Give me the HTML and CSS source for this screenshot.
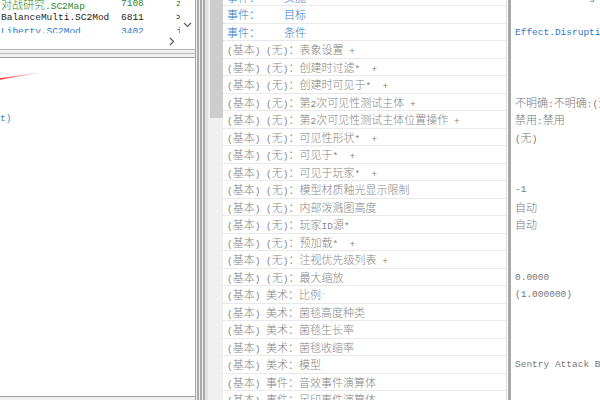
FILE: index.html
```html
<!DOCTYPE html>
<html lang="zh">
<head>
    <meta charset="UTF-8">
    <meta name="viewport" content="width=device-width, initial-scale=1.0">
    <title>数据编辑器</title>
    <link rel="stylesheet" href="styles.css">
</head>
<body>
    <div class="editor">
        <!-- 左侧：文件列表 + 画布 -->
        <div class="left">
            <div class="files">
                <div class="file-list">
                    <div class="file green"><span class="fname">对战研究<span class="m">.SC2Map</span></span><span class="fsize m">7108</span><span class="fext m">z</span></div>
                    <div class="file dark"><span class="fname m">BalanceMulti.SC2Mod</span><span class="fsize m">6811</span><span class="fext m">&gt;</span></div>
                    <div class="file blue"><span class="fname m">Liberty.SC2Mod</span><span class="fsize m">3402</span><span class="fext m">j</span></div>
                </div>
                <div class="vscroll">
                    <svg width="9" height="6" viewBox="0 0 9 6"><polyline points="1,1 4.5,4.5 8,1" fill="none" stroke="#5a5a5a" stroke-width="1.2"/></svg>
                </div>
            </div>
            <div class="hscroll">
                <svg width="6" height="9" viewBox="0 0 6 9"><polyline points="1,1 4.5,4.5 1,8" fill="none" stroke="#5a5a5a" stroke-width="1.2"/></svg>
            </div>
            <div class="sash"></div>
            <div class="canvas">
                <svg class="stroke" width="40" height="8" viewBox="0 0 40 8">
                    <defs>
                        <linearGradient id="fade" x1="0" x2="1" y1="0" y2="0">
                            <stop offset="0" stop-color="#ff1e1e"/>
                            <stop offset="1" stop-color="#ff9a9a" stop-opacity="0.3"/>
                        </linearGradient>
                    </defs>
                    <polygon points="0,6.2 38,0.6 38,1.2 0,7.8" fill="url(#fade)"/>
                </svg>
                <div class="code m">t)</div>
            </div>
        </div>

        <div class="splitter"></div>
        <div class="scrollbar"><div class="thumb"></div></div>

        <!-- 右侧：属性表 -->
        <div class="props">
            <div class="names list">
                <div class="row ev"><span class="k">事件：</span>实施</div>
                <div class="row ev"><span class="k">事件：</span>目标</div>
                <div class="row ev"><span class="k">事件：</span>条件</div>
                <div class="row"><span class="m">(</span>基本<span class="m">) (</span>无<span class="m">)</span>：表象设置<span class="m"> +</span></div>
                <div class="row"><span class="m">(</span>基本<span class="m">) (</span>无<span class="m">)</span>：创建时过滤<span class="m">*  +</span></div>
                <div class="row"><span class="m">(</span>基本<span class="m">) (</span>无<span class="m">)</span>：创建时可见于<span class="m">*  +</span></div>
                <div class="row"><span class="m">(</span>基本<span class="m">) (</span>无<span class="m">)</span>：第<span class="m">2</span>次可见性测试主体<span class="m"> +</span></div>
                <div class="row"><span class="m">(</span>基本<span class="m">) (</span>无<span class="m">)</span>：第<span class="m">2</span>次可见性测试主体位置操作<span class="m"> +</span></div>
                <div class="row"><span class="m">(</span>基本<span class="m">) (</span>无<span class="m">)</span>：可见性形状<span class="m">*  +</span></div>
                <div class="row"><span class="m">(</span>基本<span class="m">) (</span>无<span class="m">)</span>：可见于<span class="m">*  +</span></div>
                <div class="row"><span class="m">(</span>基本<span class="m">) (</span>无<span class="m">)</span>：可见于玩家<span class="m">*  +</span></div>
                <div class="row"><span class="m">(</span>基本<span class="m">) (</span>无<span class="m">)</span>：模型材质釉光显示限制</div>
                <div class="row"><span class="m">(</span>基本<span class="m">) (</span>无<span class="m">)</span>：内部泼溅图高度</div>
                <div class="row"><span class="m">(</span>基本<span class="m">) (</span>无<span class="m">)</span>：玩家<span class="m">ID</span>源<span class="m">*</span></div>
                <div class="row"><span class="m">(</span>基本<span class="m">) (</span>无<span class="m">)</span>：预加载<span class="m">*  +</span></div>
                <div class="row"><span class="m">(</span>基本<span class="m">) (</span>无<span class="m">)</span>：注视优先级列表<span class="m"> +</span></div>
                <div class="row"><span class="m">(</span>基本<span class="m">) (</span>无<span class="m">)</span>：最大缩放</div>
                <div class="row"><span class="m">(</span>基本<span class="m">) </span>美术：比例<span class="m">`</span></div>
                <div class="row"><span class="m">(</span>基本<span class="m">) </span>美术：菌毯高度种类</div>
                <div class="row"><span class="m">(</span>基本<span class="m">) </span>美术：菌毯生长率</div>
                <div class="row"><span class="m">(</span>基本<span class="m">) </span>美术：菌毯收缩率</div>
                <div class="row"><span class="m">(</span>基本<span class="m">) </span>美术：模型</div>
                <div class="row"><span class="m">(</span>基本<span class="m">) </span>事件：音效事件演算体</div>
                <div class="row"><span class="m">(</span>基本<span class="m">) </span>事件：足印事件演算体</div>
            </div>
            <div class="divider"></div>
            <div class="values list m">
                <div class="val link">AbilEffectTarget,Sentry</div>
                <div class="val"></div>
                <div class="val link">Effect.DisruptionWebSearch</div>
                <div class="val"></div>
                <div class="val"></div>
                <div class="val"></div>
                <div class="val"><span class="c">不明确</span>:<span class="c">不明确</span>:(<span class="c">无</span>)</div>
                <div class="val"><span class="c">禁用</span>:<span class="c">禁用</span></div>
                <div class="val">(<span class="c">无</span>)</div>
                <div class="val"></div>
                <div class="val"></div>
                <div class="val">-1</div>
                <div class="val"><span class="c">自动</span></div>
                <div class="val"><span class="c">自动</span></div>
                <div class="val"></div>
                <div class="val"></div>
                <div class="val">0.0000</div>
                <div class="val">(1.000000)</div>
                <div class="val"></div>
                <div class="val"></div>
                <div class="val"></div>
                <div class="val">Sentry Attack Base</div>
                <div class="val"></div>
                <div class="val"></div>
            </div>
        </div>
    </div>
</body>
</html>
```

FILE: styles.css
```css
* {
    box-sizing: border-box;
}

body {
    margin: 0;
    width: 600px;
    height: 400px;
    overflow: hidden;
    background: #f0f0f0;
    font-family: "Noto Sans CJK SC", sans-serif;
    font-size: 11px;
    font-weight: 300;
    color: #858585;
}

.m {
    font-family: "Liberation Mono", monospace;
    font-size: 9.5px;
    font-weight: 400;
}

.c {
    font-family: "Noto Sans CJK SC", sans-serif;
    font-size: 11px;
    font-weight: 300;
}

.editor {
    display: flex;
    height: 400px;
}

/* 左侧 */
.left {
    flex: none;
    width: 196px;
    display: flex;
    flex-direction: column;
    border-right: 1px solid #a5a5a5;
    padding-bottom: 3px;
    background: #f0f0f0;
}

.files {
    height: 33px;
    display: flex;
    background: #fff;
    overflow: hidden;
}

.file-list {
    flex: 1;
    min-width: 0;
    margin-top: -3px;
    overflow: hidden;
}

.file {
    height: 14px;
    line-height: 14px;
    white-space: nowrap;
    overflow: hidden;
}

.fname,
.fsize,
.fext {
    display: inline-block;
    vertical-align: top;
}

.fname {
    width: 121px;
    padding-left: 1px;
}

.fsize {
    width: 55px;
}

.green { color: #2e8a2e; }
.dark { color: #1c1c1c; }
.blue { color: #1f7ad4; }

.vscroll {
    flex: none;
    width: 15px;
    background: #fff;
    display: flex;
    justify-content: center;
    align-items: flex-start;
    padding-top: 22px;
}

.vscroll svg,
.hscroll svg {
    display: block;
}

.hscroll {
    height: 16px;
    background: #fff;
    display: flex;
    justify-content: flex-end;
    align-items: center;
    padding-right: 20px;
}

.sash {
    height: 9px;
    border-top: 1px solid #b5b5b5;
    border-bottom: 1px solid #a0a0a0;
    background: linear-gradient(#f0f0f0 3px, #b9b9b9 3px, #b9b9b9 4px, #f0f0f0 4px);
}

.canvas {
    flex: 1;
    background: #fff;
    border-bottom: 1px solid #a0a0a0;
}

.stroke {
    display: block;
    margin-top: 14px;
}

.code {
    margin-top: 33px;
    color: #3a86d8;
    line-height: 12px;
}

/* 分隔条与滚动条 */
.splitter {
    flex: none;
    width: 12px;
    background: linear-gradient(to right,
        #f0f0f0 0 1px, #aaaaaa 1px 3px,
        #f0f0f0 3px 4px, #aaaaaa 4px 6px,
        #f0f0f0 6px 7px, #aaaaaa 7px 9px,
        #e2e2e2 9px 12px);
}

.scrollbar {
    flex: none;
    width: 15px;
    background: #f0f0f0;
    padding-left: 2px;
}

.thumb {
    height: 118px;
    background: #cdcdcd;
}

/* 属性表 */
.props {
    flex: 1;
    min-width: 0;
    display: flex;
    background: #fff;
    overflow: hidden;
}

.list {
    margin-top: -11.5px;
}

.names {
    flex: none;
    width: 284px;
    border-right: 1px solid #dedede;
}

.row {
    height: 17.5px;
    line-height: 16.5px;
    padding-left: 4px;
    border-bottom: 1px solid #e9e9e9;
    white-space: pre;
    overflow: hidden;
}

.row.ev {
    color: #2f78c9;
}

.k {
    display: inline-block;
    width: 57px;
}

.divider {
    flex: none;
    width: 4px;
    border-left: 1px solid #fff;
    background: #a8a8a8;
}

.values {
    flex: 1;
    min-width: 0;
    padding-left: 4px;
    color: #777;
}

.val {
    height: 17.5px;
    line-height: 17.5px;
    white-space: nowrap;
    overflow: hidden;
}

.val.link {
    color: #2f78c9;
}
```
